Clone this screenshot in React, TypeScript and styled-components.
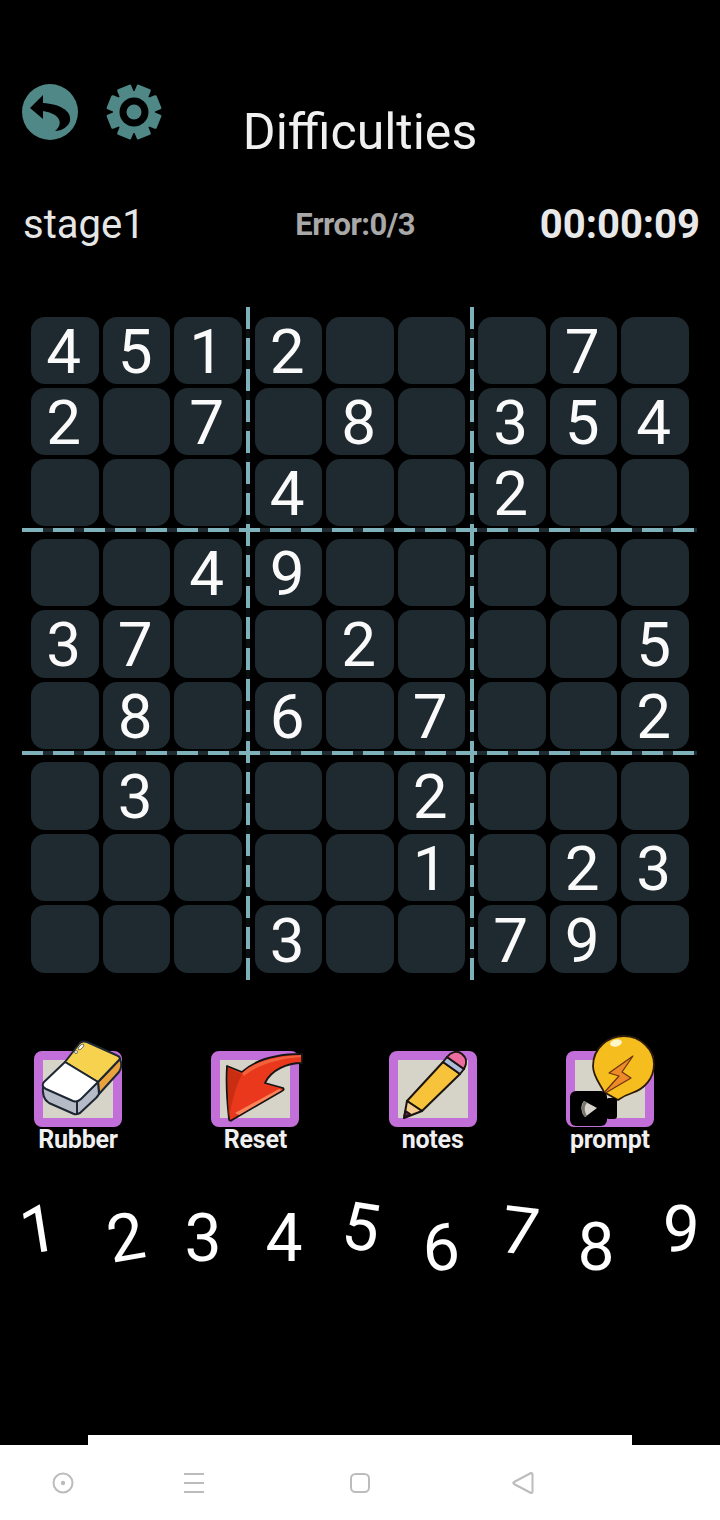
import styled, { createGlobalStyle } from "styled-components";

const GlobalStyle = createGlobalStyle`
  html, body {
    margin: 0;
    padding: 0;
    background: #000;
    font-family: Roboto, "Liberation Sans", sans-serif;
  }
`;

const Page = styled.div`
  width: 720px;
  height: 1520px;
  display: flex;
  flex-direction: column;
  background: #000;
  overflow: hidden;
`;

const Header = styled.header`
  display: grid;
  grid-template-columns: 1fr auto 1fr;
  padding-top: 84px;
`;

const HeaderIcons = styled.div`
  display: flex;
  align-items: flex-start;
  gap: 28px;
  padding-left: 22px;
`;

const Title = styled.h1`
  margin: 20px 0 0;
  font-size: 50px;
  line-height: 56px;
  font-weight: 400;
  color: #f0f0f0;
`;

const StatusRow = styled.div`
  display: flex;
  justify-content: space-between;
  align-items: center;
  height: 44px;
  margin-top: 42px;
  padding: 0 20px 0 23px;
`;

const Stage = styled.span`
  font-size: 40px;
  font-weight: 400;
  color: #e6e6e6;
`;

const ErrorCount = styled.span`
  font-size: 31px;
  font-weight: 700;
  letter-spacing: -0.5px;
  color: #a8a8a8;
  margin-left: 26px;
`;

const Timer = styled.span`
  font-size: 40px;
  font-weight: 700;
  color: #e8e8e8;
`;

const Board = styled.div`
  position: relative;
  width: 675px;
  height: 673px;
  box-sizing: border-box;
  margin: 61px 0 0 22px;
  padding: 10px 0 0 9px;
  display: grid;
  grid-template-columns: repeat(3, 210.5px);
  grid-template-rows: 209px 211px 211px;
  column-gap: 13px;
  row-gap: 12.5px;
`;

const Box = styled.div`
  display: grid;
  grid-template-columns: repeat(3, 1fr);
  grid-template-rows: repeat(3, 1fr);
  gap: 4px;
`;

const Cell = styled.div`
  display: flex;
  align-items: center;
  justify-content: center;
  box-sizing: border-box;
  padding: 3px 2px 0 0;
  background: #1e2a30;
  border-radius: 14px;
  font-size: 62px;
  line-height: 1;
  color: #fafafa;
`;

const Rule = styled.div<{ $vertical?: boolean; $at: number }>`
  position: absolute;
  ${({ $vertical, $at }) =>
    $vertical
      ? `left: ${$at}px; top: 0; bottom: 0; width: 4px;
         background: repeating-linear-gradient(to bottom, #7fb1ba 0 22px, #0a1012 22px 31px);`
      : `top: ${$at}px; left: 0; right: 0; height: 4px;
         background: repeating-linear-gradient(to right, #7fb1ba 0 21px, #1e2a30 21px 31px);`}
`;

const Tools = styled.div`
  display: flex;
  gap: 89.3px;
  margin-top: 71px;
  padding-left: 34px;
`;

const Tool = styled.div`
  width: 88px;
  display: flex;
  flex-direction: column;
  align-items: center;
`;

const Frame = styled.div`
  position: relative;
  width: 88px;
  height: 76px;
  box-sizing: border-box;
  border: 9px solid #c26fd9;
  border-radius: 8px;
  background: #d6d3c8;
`;

const ToolArt = styled.svg`
  position: absolute;
  left: -9px;
  top: -9px;
  width: 88px;
  height: 76px;
  overflow: visible;
`;

const ToolLabel = styled.span`
  margin-top: 1px;
  font-size: 25px;
  line-height: 24px;
  font-weight: 700;
  letter-spacing: -0.2px;
  color: #f0f0f0;
  white-space: nowrap;
`;

const NumberPad = styled.div`
  display: grid;
  grid-template-columns: repeat(9, 80px);
  height: 96px;
  margin-top: 38px;
`;

const PadKey = styled.div<{ $dx: number; $dy: number; $turn: number }>`
  display: flex;
  align-items: center;
  justify-content: center;
  font-size: 66px;
  line-height: 1;
  color: #fff;
  transform: translate(${(p) => p.$dx}px, ${(p) => p.$dy}px) rotate(${(p) => p.$turn}deg);
`;

const NavBar = styled.nav`
  margin-top: auto;
  display: flex;
  flex-direction: column;
`;

const NavStrip = styled.div`
  width: 544px;
  height: 10px;
  margin-left: 88px;
  background: #fff;
`;

const NavButtons = styled.div`
  height: 75px;
  box-sizing: border-box;
  display: flex;
  align-items: center;
  padding: 0 0 0 52px;
  background: #fff;
`;

const NavIcon = styled.svg<{ $offset: number }>`
  width: 22px;
  height: 24px;
  margin-left: ${(p) => p.$offset}px;
  fill: none;
  stroke: #bcbcbc;
  stroke-width: 2;
  stroke-linejoin: round;
`;

const board = [
  "451200070",
  "207080354",
  "000400200",
  "004900000",
  "370020005",
  "080607002",
  "030002000",
  "000001023",
  "000300790",
];

const boxes = [0, 3, 6].flatMap((r) =>
  [0, 3, 6].map((c) => board.slice(r, r + 3).flatMap((row) => row.slice(c, c + 3).split("")))
);

const padKeys = [
  { n: 1, dx: -1, dy: -8, turn: -9 },
  { n: 2, dx: 6, dy: 0, turn: -10 },
  { n: 3, dx: 3, dy: 1, turn: 0 },
  { n: 4, dx: 4, dy: 1, turn: 0 },
  { n: 5, dx: 1, dy: -10, turn: 9 },
  { n: 6, dx: 1, dy: 10, turn: -3 },
  { n: 7, dx: 0, dy: -6, turn: 7 },
  { n: 8, dx: -4, dy: 10, turn: 0 },
  { n: 9, dx: 1, dy: -8, turn: 3 },
];

function BackIcon() {
  return (
    <svg width="56" height="56" viewBox="0 0 56 56">
      <circle cx="28" cy="28" r="28" fill="#4f8886" />
      <path d="M8 24 L21 11 V19 C38 20 50 27 48 37 C47 42 40 47 33 47 C38 43 39 38 36 34 C33 30 27 28 21 27 V35 Z" fill="#000" />
    </svg>
  );
}

function GearIcon() {
  return (
    <svg width="56" height="56" viewBox="0 0 56 56">
      {[22.5, 67.5, 112.5, 157.5].map((a) => (
        <rect key={a} x="20.5" y="1" width="15" height="54" rx="1.5" fill="#4f8886" transform={`rotate(${a} 28 28)`} />
      ))}
      <circle cx="28" cy="28" r="21" fill="#4f8886" />
      <circle cx="28" cy="28" r="14.5" fill="#000" />
      <circle cx="28" cy="28" r="7.5" fill="#4f8886" />
    </svg>
  );
}

function EraserArt() {
  return (
    <ToolArt viewBox="0 0 88 76" stroke="#1c2733" strokeWidth="2" strokeLinejoin="round">
      <path d="M64 31 L86 8 C88 13 87 18 85 21 L65 43 Z" fill="#eaa23c" />
      <path d="M31 11 L45 -7 C47 -10 50 -10 53 -9 L82 4 C85 5 86 6 86 8 L64 31 Z" fill="#f6d24f" />
      <path d="M9 35 C8 44 10 49 15 52 L40 63 C42 64 44 63 46 62 L62 47 C64 45 65 43 65 43 L64 31 L43 50 Z" fill="#b6bcc7" />
      <path d="M31 11 L64 31 L47 48 C45 50 42 51 39 50 L12 38 C8 36 8 33 10 31 Z" fill="#fff" />
      <path d="M43 50 V63" fill="none" />
      <ellipse cx="47" cy="-4" rx="3.6" ry="1.6" fill="#fff" strokeWidth="0.6" transform="rotate(-45 47 -4)" />
      <circle cx="42" cy="1" r="1.5" fill="#fff" strokeWidth="0.6" />
    </ToolArt>
  );
}

function ArrowArt() {
  return (
    <ToolArt viewBox="0 0 88 76">
      <path d="M18 68 C16 50 15 30 16 15 L31 21 C44 9 66 3 91 3 V12 C76 12 60 19 54 32 L72 37 C73 38 73 39 71 40 L21 69 C20 70 18 70 18 68 Z" fill="#e9381c" stroke="#151515" strokeWidth="1.8" strokeLinejoin="round" />
      <path d="M18 66 C17 50 17 32 17 17 L31 23 C28 30 24 36 18 66 Z" fill="#c92d12" />
      <path d="M31 22 C44 10 66 5 90 4 V6 C66 8 46 14 33 25 Z" fill="#f2603c" />
      <path d="M24 62 L68 38 L71 39 L28 64 Z" fill="#f8855c" />
    </ToolArt>
  );
}

function PencilArt() {
  return (
    <ToolArt viewBox="0 0 88 76" stroke="#1a1410" strokeWidth="2" strokeLinejoin="round">
      <path d="M18 50 L54 11 L71 23 L33 60 Z" fill="#f7c33a" />
      <path d="M18 50 L33 60 L15 67 Z" fill="#f6cd8f" />
      <path d="M15 67 L16.5 60 L21 63 Z" fill="#7c1f5f" />
      <path d="M54 11 L58 6 L75 18 L71 23 Z" fill="#aebcdc" />
      <path d="M58 6 C62 1 68 -1 73 3 C78 7 78 13 75 18 Z" fill="#ee6d9f" />
    </ToolArt>
  );
}

function BulbArt() {
  return (
    <ToolArt viewBox="0 0 88 76">
      <path d="M38 41 C35 34 27 26 27 15 C27 -3 42 -15 58 -15 C75 -15 88 -1 88 13 C88 28 78 38 66 42 C60 44 56 46 52 49 Z" fill="#f6bd1f" stroke="#2a1a08" strokeWidth="1.8" />
      <ellipse cx="50" cy="-8" rx="6" ry="3.5" fill="#fff6c8" transform="rotate(-12 50 -8)" />
      <path d="M67 5 L43 22 L53 25 L36 44 L65 27 L56 21 Z" fill="#ee8a2a" stroke="#6a3410" strokeWidth="1.2" strokeLinejoin="round" />
      <rect x="4" y="40" width="37" height="35" rx="6" fill="#000" />
      <rect x="40" y="47" width="11" height="21" rx="3" fill="#000" />
      <path d="M18 50 L31 57 L19 66 C15 62 14 54 18 50 Z" fill="#d8d4cc" />
      <path d="M18 50 C15 54 15 62 19 66 L21 65 C18 60 18 55 21 52 Z" fill="#7a756c" />
    </ToolArt>
  );
}

export default function App() {
  return (
    <Page>
      <GlobalStyle />
      <Header>
        <HeaderIcons>
          <BackIcon />
          <GearIcon />
        </HeaderIcons>
        <Title>Difficulties</Title>
      </Header>

      <StatusRow>
        <Stage>stage1</Stage>
        <ErrorCount>Error:0/3</ErrorCount>
        <Timer>00:00:09</Timer>
      </StatusRow>

      <Board>
        {boxes.map((cells, i) => (
          <Box key={i}>
            {cells.map((v, j) => (
              <Cell key={j}>{v !== "0" ? v : ""}</Cell>
            ))}
          </Box>
        ))}
        <Rule $vertical $at={224} />
        <Rule $vertical $at={448} />
        <Rule $at={221} />
        <Rule $at={444} />
      </Board>

      <Tools>
        <Tool>
          <Frame><EraserArt /></Frame>
          <ToolLabel>Rubber</ToolLabel>
        </Tool>
        <Tool>
          <Frame><ArrowArt /></Frame>
          <ToolLabel>Reset</ToolLabel>
        </Tool>
        <Tool>
          <Frame><PencilArt /></Frame>
          <ToolLabel>notes</ToolLabel>
        </Tool>
        <Tool>
          <Frame><BulbArt /></Frame>
          <ToolLabel>prompt</ToolLabel>
        </Tool>
      </Tools>

      <NumberPad>
        {padKeys.map((k) => (
          <PadKey key={k.n} $dx={k.dx} $dy={k.dy} $turn={k.turn}>{k.n}</PadKey>
        ))}
      </NumberPad>

      <NavBar>
        <NavStrip />
        <NavButtons>
          <NavIcon $offset={0} viewBox="0 0 22 24">
            <circle cx="11" cy="12" r="9.5" />
            <circle cx="11" cy="12" r="2.2" fill="#bcbcbc" stroke="none" />
          </NavIcon>
          <NavIcon $offset={109} viewBox="0 0 22 24">
            <path d="M1 3 H21 M1 12 H21 M1 21 H21" />
          </NavIcon>
          <NavIcon $offset={144} viewBox="0 0 22 24">
            <rect x="2" y="3" width="18" height="18" rx="4.5" />
          </NavIcon>
          <NavIcon $offset={141} viewBox="0 0 22 24">
            <path d="M19 2 C20 2 20.5 2.5 20.5 3.5 V20.5 C20.5 21.5 20 22 19 22 L2 13 C1 12.4 1 11.6 2 11 Z" />
          </NavIcon>
        </NavButtons>
      </NavBar>
    </Page>
  );
}
